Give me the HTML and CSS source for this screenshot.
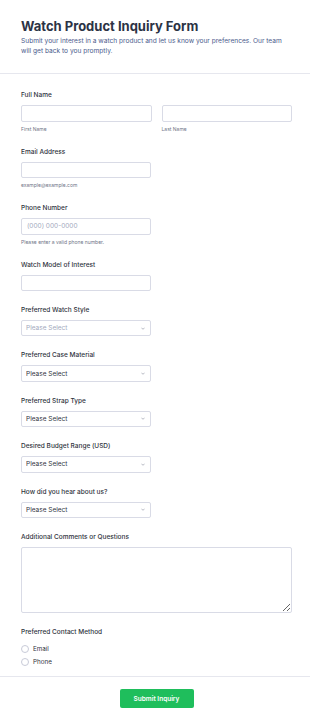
FILE: index.html
```html
<!DOCTYPE html>
<html lang="en">
<head>
  <meta charset="UTF-8">
  <title>Watch Product Inquiry Form</title>
  <link rel="stylesheet" href="styles.css">
</head>
<body>
  <form class="form">
    <!-- Cabeçalho -->
    <div class="form-header">
      <h1>Watch Product Inquiry Form</h1>
      <p>Submit your interest in a watch product and let us know your preferences. Our team will get back to you promptly.</p>
    </div>

    <div class="form-body">
      <div class="field">
        <label class="label">Full Name</label>
        <div class="name-row">
          <div class="name-col">
            <input type="text" class="input">
            <span class="sublabel">First Name</span>
          </div>
          <div class="name-col">
            <input type="text" class="input">
            <span class="sublabel">Last Name</span>
          </div>
        </div>
      </div>

      <div class="field">
        <label class="label">Email Address</label>
        <input type="text" class="input half">
        <span class="sublabel">example@example.com</span>
      </div>

      <div class="field">
        <label class="label">Phone Number</label>
        <input type="text" class="input half" placeholder="(000) 000-0000">
        <span class="sublabel">Please enter a valid phone number.</span>
      </div>

      <div class="field">
        <label class="label">Watch Model of Interest</label>
        <input type="text" class="input half">
      </div>

      <div class="field">
        <label class="label">Preferred Watch Style</label>
        <div class="select-wrap">
          <select class="select placeholder"><option>Please Select</option></select>
          <svg class="chevron" viewBox="0 0 10 6"><path d="M1 1l4 4 4-4" fill="none" stroke="#7d8193" stroke-width="1.4"/></svg>
        </div>
      </div>

      <div class="field">
        <label class="label">Preferred Case Material</label>
        <div class="select-wrap">
          <select class="select"><option>Please Select</option></select>
          <svg class="chevron" viewBox="0 0 10 6"><path d="M1 1l4 4 4-4" fill="none" stroke="#7d8193" stroke-width="1.4"/></svg>
        </div>
      </div>

      <div class="field">
        <label class="label">Preferred Strap Type</label>
        <div class="select-wrap">
          <select class="select"><option>Please Select</option></select>
          <svg class="chevron" viewBox="0 0 10 6"><path d="M1 1l4 4 4-4" fill="none" stroke="#7d8193" stroke-width="1.4"/></svg>
        </div>
      </div>

      <div class="field">
        <label class="label">Desired Budget Range (USD)</label>
        <div class="select-wrap">
          <select class="select"><option>Please Select</option></select>
          <svg class="chevron" viewBox="0 0 10 6"><path d="M1 1l4 4 4-4" fill="none" stroke="#7d8193" stroke-width="1.4"/></svg>
        </div>
      </div>

      <div class="field">
        <label class="label">How did you hear about us?</label>
        <div class="select-wrap">
          <select class="select"><option>Please Select</option></select>
          <svg class="chevron" viewBox="0 0 10 6"><path d="M1 1l4 4 4-4" fill="none" stroke="#7d8193" stroke-width="1.4"/></svg>
        </div>
      </div>

      <div class="field">
        <label class="label">Additional Comments or Questions</label>
        <textarea class="textarea"></textarea>
      </div>

      <div class="field last">
        <label class="label">Preferred Contact Method</label>
        <label class="radio"><span class="dot"></span>Email</label>
        <label class="radio"><span class="dot"></span>Phone</label>
      </div>
    </div>

    <div class="form-footer">
      <button type="button" class="submit">Submit Inquiry</button>
    </div>
  </form>
</body>
</html>
```

FILE: styles.css
```css
/* Reset e estilos gerais */
* {
  box-sizing: border-box;
}
body {
  margin: 0;
  background: #fff;
  font-family: 'Inter', 'Liberation Sans', sans-serif;
  color: #2f3340;
}
.form-header {
  padding: 17px 21px 17px;
  border-bottom: 1px solid #e6e7ee;
}
.form-header h1 {
  margin: 0;
  font-size: 13px;
  line-height: 18px;
  font-weight: 700;
  color: #2c3345;
}
.form-header p {
  margin: 1px 0 0;
  font-size: 6.6px;
  line-height: 10px;
  color: #4a5a8c;
}
.form-body {
  padding: 16px 18px 3px 21px;
}
.field {
  display: flex;
  flex-direction: column;
  align-items: flex-start;
  margin-bottom: 14px;
}
.field.last {
  margin-bottom: 0;
}
.label {
  font-size: 6.5px;
  line-height: 10px;
  font-weight: 500;
  color: #2f3340;
  margin-bottom: 5px;
}
.name-row {
  display: flex;
  gap: 10px;
  width: 100%;
}
.name-col {
  flex: 1;
  display: flex;
  flex-direction: column;
}
.input {
  display: block;
  width: 100%;
  height: 16.5px;
  border: 1px solid #d9dbe6;
  border-radius: 2px;
  padding: 0 5px;
  font-family: inherit;
  font-size: 6.5px;
  color: #2f3340;
}
.input.half {
  width: 130px;
}
.input::placeholder {
  color: #a3a9bd;
}
.sublabel {
  margin-top: 3px;
  font-size: 5px;
  line-height: 8px;
  color: #6f7587;
}
.select-wrap {
  position: relative;
  width: 130px;
}
.select {
  display: block;
  appearance: none;
  width: 100%;
  height: 16.4px;
  border: 1px solid #d9dbe6;
  border-radius: 2px;
  padding: 0 4px;
  background: #fff;
  font-family: inherit;
  font-size: 6.5px;
  color: #2f3340;
}
.select.placeholder {
  color: #a3a9bd;
}
.chevron {
  position: absolute;
  right: 6px;
  top: 6.7px;
  width: 4px;
  height: 3px;
}
.textarea {
  display: block;
  width: 100%;
  height: 66.5px;
  border: 1px solid #d9dbe6;
  border-radius: 2px;
  resize: vertical;
  font-family: inherit;
}
.radio {
  display: flex;
  align-items: center;
  height: 13px;
  font-size: 6.3px;
  color: #2f3340;
}
.dot {
  width: 8px;
  height: 8px;
  border: 1px solid #c8cbd8;
  border-radius: 50%;
  margin-right: 4px;
}
.form-footer {
  margin-top: 5px;
  border-top: 1px solid #e6e7ee;
  padding: 12px 0 16px;
  display: flex;
  justify-content: center;
}
.submit {
  width: 74px;
  height: 19px;
  border: none;
  border-radius: 2px;
  background: #1fbe5c;
  color: #fff;
  font-family: inherit;
  font-size: 6.5px;
  font-weight: 600;
  margin-left: 3px;
}
```
